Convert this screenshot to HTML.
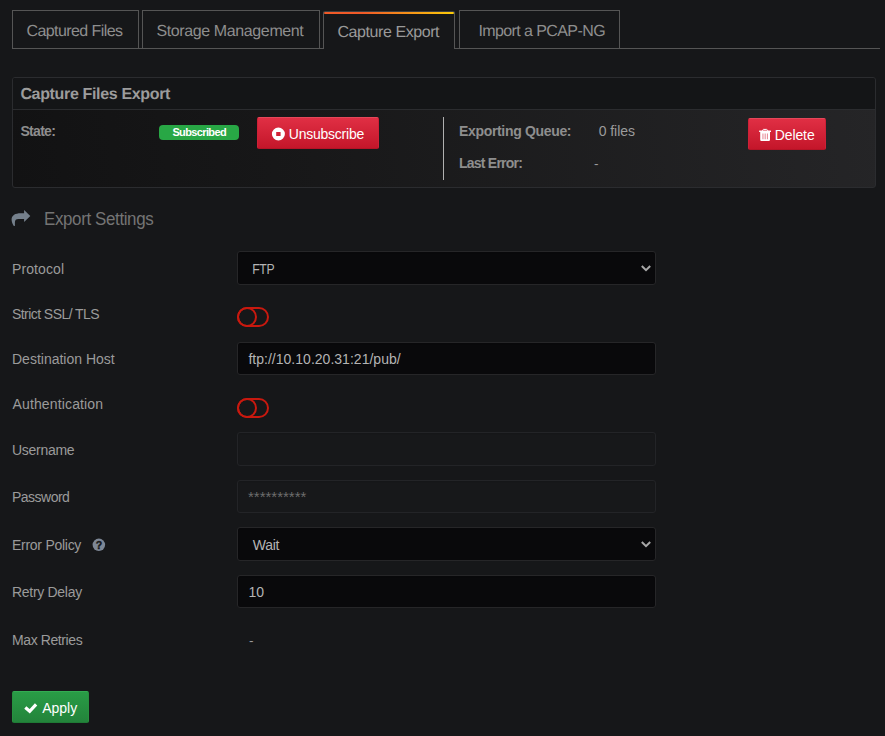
<!DOCTYPE html>
<html lang="en">
<head>
<meta charset="utf-8">
<title>Capture Export</title>
<style>
html,body{margin:0;padding:0}
body{width:885px;height:736px;background:#161719;position:relative;overflow:hidden;font-family:"Liberation Sans",sans-serif;font-size:14px;color:#9b9b9b}
nav,form,h2,h3,ul,li,dl,dt,dd,p{margin:0;padding:0;font:inherit;list-style:none}
.a{position:absolute;box-sizing:border-box;display:block}
.t{position:absolute;display:block;line-height:20px;height:20px;white-space:pre;font-weight:400}
.b{font-weight:700}
.g{text-rendering:geometricPrecision}
a{color:inherit;text-decoration:none}
button{font:inherit;color:inherit;margin:0;padding:0;text-align:left;cursor:pointer;-webkit-appearance:none;appearance:none}
svg{position:absolute;overflow:visible}
/* tabs */
.tabs::after{content:"";position:absolute;left:12px;top:48px;width:868px;height:1px;background:#555}
.tab{top:10px;height:39px;border:1px solid #555;background:#161719;color:#8e8e8e;z-index:1}
.tab.active{top:11px;height:38px;border-bottom:0;border-top-color:#3a3d40;border-radius:2px 2px 0 0;color:#9a9a9a}
.tab.active::before{content:"";position:absolute;left:0;right:0;top:0;height:2px;border-radius:1px;background:linear-gradient(to right,#f05a28 30%,#fbca0a 99%)}
/* panel */
.panel{left:12px;top:77px;width:864px;height:111px;border:1px solid #2b2c2f;border-radius:3px;background:linear-gradient(83deg,#121213 0%,#171718 30%,#252527 100%)}
.phead{left:0;top:0;width:862px;height:32px;background:#141517;border-bottom:1px solid #2b2c2f;border-radius:2px 2px 0 0;color:#9c9c9c}
.k{color:#8e8e8e}
.btn{border-radius:2px;border:1px solid transparent;color:#fff}
.btn.red{background:linear-gradient(to bottom,#e02f44,#c4162a);border-color:#e5475a #cf2037 #b51326}
.btn.green{background:linear-gradient(to bottom,#299c46,#23843b);border-color:#33ab52 #27913f #1f7a35}
.badge{left:146px;top:47px;width:80px;height:15px;border-radius:4px;background:#28a745;color:#fff}
.vdiv{left:430px;top:39px;width:1px;height:63px;background:#b0b0b0}
/* form */
.heading{color:#747474}
.inp{left:237px;width:419px;height:33px;border:1px solid #262628;border-radius:3px;background:#09090b;box-shadow:inset 0 1px 1px rgba(0,0,0,.075);color:#b4b4b4}
.inp.sel{height:34px}
.inp.dis{background:#17181a;border-color:#232427;color:#6c6c6c}
.tog{left:237px;width:32px;height:20px;border:2px solid #c8190f;border-radius:10px}
.tog::before{content:"";position:absolute;left:-2px;top:-2px;width:16px;height:16px;border:2px solid #c8190f;border-radius:50%}
</style>
</head>
<body>

<nav class="tabs">
  <a class="a tab" href="#captured" style="left:12px;width:127px"><span class="t g" style="left:13.4px;top:11px;font-size:16px;letter-spacing:-0.57px">Captured Files</span></a>
  <a class="a tab" href="#storage" style="left:142px;width:178px"><span class="t g" style="left:13.4px;top:11px;font-size:16px;letter-spacing:-0.38px">Storage Management</span></a>
  <a class="a tab active" href="#export" style="left:323px;width:132px"><span class="t g" style="left:13.4px;top:11px;font-size:16px;letter-spacing:-0.42px">Capture Export</span></a>
  <a class="a tab" href="#import" style="left:459px;width:161px"><span class="t g" style="left:18.4px;top:11px;font-size:16px;letter-spacing:-0.59px">Import a PCAP-NG</span></a>
</nav>

<section class="a panel">
  <h3 class="a phead"><span class="t b g" style="left:7.4px;top:7px;font-size:16px;letter-spacing:-0.34px">Capture Files Export</span></h3>
  <span class="t b k" style="left:7.4px;top:43px;letter-spacing:-0.68px">State:</span>
  <span class="a badge"><span class="t b" style="left:13.4px;top:-3px;font-size:11px;letter-spacing:-0.63px">Subscribed</span></span>
  <button type="button" class="a btn red" style="left:244px;top:39px;width:122px;height:32px"><svg style="left:13px;top:9px" width="15" height="15" viewBox="0 0 15 15"><g transform="translate(0.9 0.5)"><path fill="#fff" fill-rule="evenodd" d="M6.500 0a6.500 6.500 0 1 0 0 13a6.500 6.500 0 1 0 0-13zM4.300 4.400h4.400v4.200H4.300z"/></g></svg><span class="t" style="left:30.8px;top:6px;letter-spacing:-0.24px">Unsubscribe</span></button>
  <span class="a vdiv"></span>
  <span class="t b k" style="left:446px;top:43px;letter-spacing:-0.33px">Exporting Queue:</span>
  <span class="t" style="left:585.8px;top:43px;letter-spacing:-0.08px">0 files</span>
  <span class="t b k" style="left:446px;top:75px;letter-spacing:-0.77px">Last Error:</span>
  <span class="t" style="left:581px;top:76px;font-size:13.6px">-</span>
  <button type="button" class="a btn red" style="left:735px;top:40px;width:78px;height:32px"><svg style="left:10px;top:9px" width="14" height="15" viewBox="0 0 14 15"><g transform="translate(0.1 0.9)"><path fill="none" stroke="#fff" stroke-width="1" d="M3.300 2L3.900 .8Q4.100 .5 4.500 .5H7.500Q7.900 .5 8.100 .8L8.700 2"/><rect x="0" y="1.700" width="11.900" height="1.400" rx=".3" fill="#fff"/><path fill="#fff" fill-rule="evenodd" d="M1.100 3.100H10.900V10.900Q10.900 12.100 9.700 12.100H2.300Q1.100 12.100 1.100 10.900zM3.600 4.600h.55v5.800h-.55zM5.720 4.600h.55v5.800h-.55zM7.850 4.600h.55v5.800h-.55z"/></g></svg><span class="t" style="left:25.8px;top:6px;letter-spacing:-0.12px">Delete</span></button>
</section>

<h2 class="heading"><svg style="left:11px;top:209px" width="21" height="18" viewBox="0 0 21 18"><g transform="translate(0.6 0.9)"><path fill="#75808c" d="M12.500 0L18.700 6.100L12.500 12.200V9.100H7C4.400 9.100 3.300 10.200 3.300 12.500V15.500Q3.200 16.100 2.700 16.100Q2.200 16.100 1.900 15.500C.7 13.500 0 11.500 0 9.800C0 5.400 3.800 3.400 9 3.400H12.500Z"/></g></svg><span class="t" style="left:44px;top:209px;font-size:18px;letter-spacing:-0.4px;transform-origin:1px 0;transform:scaleX(0.941)">Export Settings</span></h2>

<form>
  <div class="row"><label class="t" style="left:12px;top:259px;letter-spacing:0.09px">Protocol</label><div class="a inp sel" style="top:251px"><span class="t" style="left:13.7px;top:7px;letter-spacing:-0.3px;transform-origin:1px 0;transform:scaleX(0.873)">FTP</span><svg style="left:403px;top:13px" width="11" height="8" viewBox="0 0 11 8"><path d="M.8 1l4.200 4.200L9.200 1" fill="none" stroke="#a8a8a8" stroke-width="2"/></svg></div></div>
  <div class="row"><label class="t" style="left:12px;top:304px;letter-spacing:-0.56px">Strict SSL/ TLS</label><span class="a tog" style="top:307px"></span></div>
  <div class="row"><label class="t" style="left:12px;top:349px">Destination Host</label><div class="a inp" style="top:342px"><span class="t" style="left:10.4px;top:6px;letter-spacing:0.02px">ftp://10.10.20.31:21/pub/</span></div></div>
  <div class="row"><label class="t" style="left:12.5px;top:394px;letter-spacing:0.14px">Authentication</label><span class="a tog" style="top:398px"></span></div>
  <div class="row"><label class="t" style="left:12px;top:440px;letter-spacing:-0.29px">Username</label><div class="a inp dis" style="top:432px;height:34px"></div></div>
  <div class="row"><label class="t" style="left:12px;top:487px;letter-spacing:-0.51px">Password</label><div class="a inp dis" style="top:480px"><span class="t" style="left:10px;top:6px;font-size:15px">**********</span></div></div>
  <div class="row"><label class="t" style="left:12px;top:535px;letter-spacing:-0.27px">Error Policy</label><svg style="left:92px;top:538px" width="14" height="14" viewBox="0 0 14 14"><g transform="translate(0.6 0.6)"><circle cx="6.250" cy="6.250" r="6.250" fill="#7d8796"/><text x="6.300" y="10.100" text-anchor="middle" font-family="Liberation Sans, sans-serif" font-weight="700" font-size="10.600" fill="#161719" stroke="#161719" stroke-width=".4">?</text></g></svg><div class="a inp sel" style="top:527px"><span class="t" style="left:14.7px;top:7px;letter-spacing:-0.23px">Wait</span><svg style="left:403px;top:13px" width="11" height="8" viewBox="0 0 11 8"><path d="M.8 1l4.200 4.200L9.200 1" fill="none" stroke="#a8a8a8" stroke-width="2"/></svg></div></div>
  <div class="row"><label class="t" style="left:12px;top:582px;letter-spacing:-0.3px">Retry Delay</label><div class="a inp" style="top:575px"><span class="t" style="left:10.4px;top:6px">10</span></div></div>
  <div class="row"><label class="t" style="left:12px;top:630px;letter-spacing:-0.4px">Max Retries</label><span class="t" style="left:249px;top:631px;font-size:13.6px">-</span></div>
  <button type="button" class="a btn green" style="left:12px;top:691px;width:77px;height:32px"><svg style="left:11px;top:11px" width="14" height="12" viewBox="0 0 14 12"><path d="M1.300 4.500L5.700 8.300L12.100 1.400" fill="none" stroke="#fff" stroke-width="3.200"/></svg><span class="t" style="left:29.2px;top:6px">Apply</span></button>
</form>

</body>
</html>
